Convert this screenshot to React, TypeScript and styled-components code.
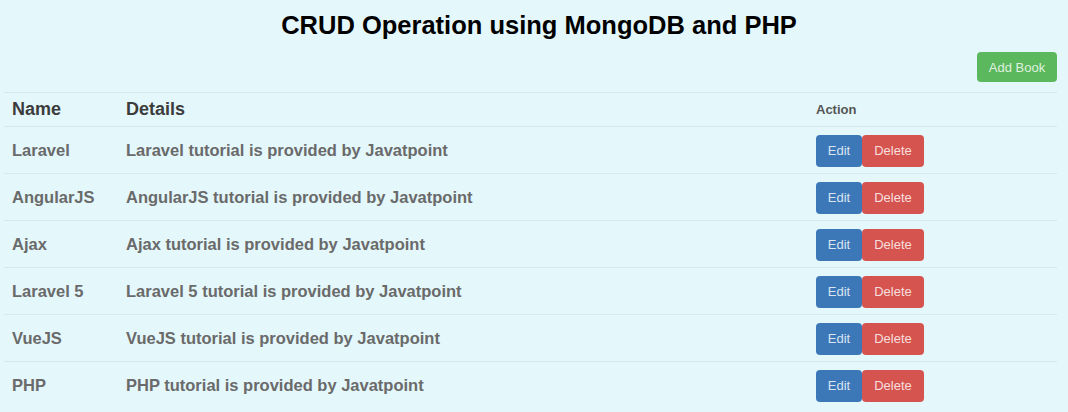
import styled, { createGlobalStyle } from "styled-components";

const GlobalStyle = createGlobalStyle`
  html, body {
    margin: 0;
    padding: 0;
    background: #e4f8fc;
    font-family: "Liberation Sans", Arial, sans-serif;
  }
`;

const Page = styled.div`
  width: 1068px;
  height: 412px;
  overflow: hidden;
  background: #e4f8fc;
`;

const Title = styled.h2`
  margin: 0;
  padding: 11px 0 0 10px;
  text-align: center;
  font-size: 25.5px;
  line-height: 29px;
  font-weight: bold;
  color: #000;
`;

const Toolbar = styled.div`
  display: flex;
  justify-content: flex-end;
  padding: 12px 11px 0 0;
`;

const Button = styled.button<{ $bg: string; $w: number; $h: number }>`
  width: ${(p) => p.$w}px;
  height: ${(p) => p.$h}px;
  padding: 0;
  border: none;
  border-radius: 4px;
  background: ${(p) => p.$bg};
  color: rgba(255, 255, 255, 0.82);
  font-family: "Liberation Sans", Arial, sans-serif;
  font-size: 13px;
  cursor: pointer;
`;

const Table = styled.table`
  margin: 10px 0 0 4px;
  width: 1053px;
  border-collapse: collapse;
  table-layout: fixed;
`;

const Row = styled.tr<{ $head?: boolean }>`
  height: ${(p) => (p.$head ? 34 : 47)}px;
  border-top: 1px solid #d3e9ed;
`;

const HeadCell = styled.th<{ $small?: boolean }>`
  text-align: left;
  padding: 0 0 0 8px;
  font-size: ${(p) => (p.$small ? 13 : 18)}px;
  font-weight: bold;
  color: ${(p) => (p.$small ? "#555" : "#3c3c3c")};
`;

const Cell = styled.td`
  padding: 1px 0 0 8px;
  font-size: 16.5px;
  font-weight: bold;
  color: #6a6a6a;
`;

const Actions = styled.div`
  display: flex;
`;

const books = [
  "Laravel",
  "AngularJS",
  "Ajax",
  "Laravel 5",
  "VueJS",
  "PHP",
];

export default function App() {
  return (
    <Page>
      <GlobalStyle />
      <Title>CRUD Operation using MongoDB and PHP</Title>
      <Toolbar>
        <Button $bg="#5cb85c" $w={80} $h={30}>
          Add Book
        </Button>
      </Toolbar>
      <Table>
        <colgroup>
          <col style={{ width: 114 }} />
          <col style={{ width: 690 }} />
          <col />
        </colgroup>
        <thead>
          <Row $head>
            <HeadCell>Name</HeadCell>
            <HeadCell>Details</HeadCell>
            <HeadCell $small>Action</HeadCell>
          </Row>
        </thead>
        <tbody>
          {books.map((name) => (
            <Row key={name}>
              <Cell>{name}</Cell>
              <Cell>{name} tutorial is provided by Javatpoint</Cell>
              <Cell>
                <Actions>
                  <Button $bg="#3c78b8" $w={46} $h={32}>
                    Edit
                  </Button>
                  <Button $bg="#d65450" $w={62} $h={32}>
                    Delete
                  </Button>
                </Actions>
              </Cell>
            </Row>
          ))}
        </tbody>
      </Table>
    </Page>
  );
}
